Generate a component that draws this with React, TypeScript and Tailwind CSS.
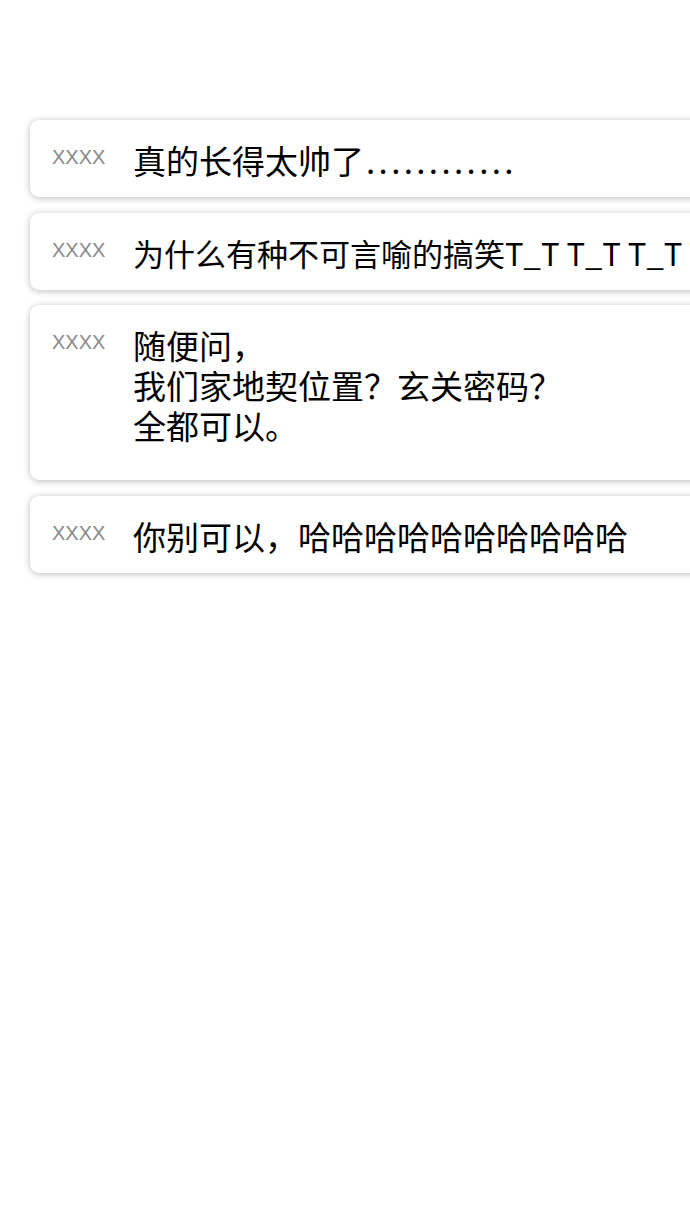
const comments = [
  { id: 1, user: "XXXX", lines: ["真的长得太帅了"], dots: "............" },
  { id: 2, user: "XXXX", lines: ["为什么有种不可言喻的搞笑T_T T_T T_T T_T"], small: true },
  {
    id: 3,
    user: "XXXX",
    lines: ["随便问，", "我们家地契位置？玄关密码？", "全都可以。"],
    tall: true,
  },
  { id: 4, user: "XXXX", lines: ["你别可以，哈哈哈哈哈哈哈哈哈哈"] },
];

export default function App() {
  return (
    <div className="min-h-[1213px] w-full overflow-hidden bg-white pt-[120px]">
      <div className="flex flex-col gap-[15.5px] pl-[30px]">
        {comments.map((c) => (
          <div
            key={c.id}
            className={`-mr-6 flex items-start rounded-[9px] bg-white pl-[22px] pt-5 shadow-[0_1px_7px_rgba(0,0,0,0.28)] ${
              c.tall ? "pb-[35px]" : "pb-[17px]"
            }`}
          >
            <span className="w-[81px] shrink-0 font-['Liberation_Sans',Arial,sans-serif] text-[20px] leading-[34px] text-[#8a8a8a]">
              {c.user}
            </span>
            <div
              className={`whitespace-nowrap font-['Noto_Sans_CJK_SC','Noto_Sans',sans-serif] leading-[40px] text-black ${
                c.small ? "text-[31px]" : "text-[33px]"
              }`}
            >
              {c.lines.map((l) => (
                <div key={l}>
                  {l}
                  {c.dots && <span className="ml-[2px] tracking-[3.4px]">{c.dots}</span>}
                </div>
              ))}
            </div>
          </div>
        ))}
      </div>
    </div>
  );
}
